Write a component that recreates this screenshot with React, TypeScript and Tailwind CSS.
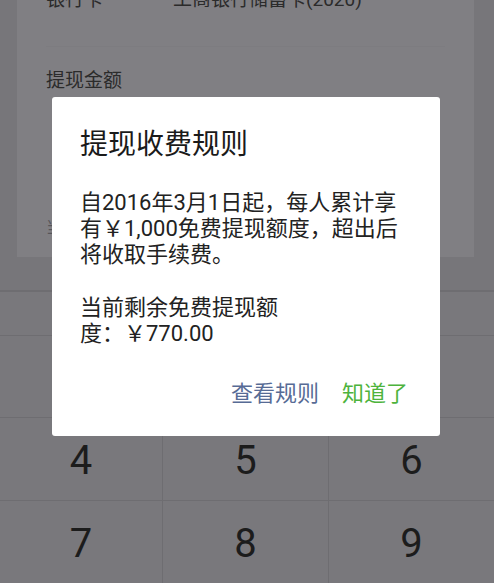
const font = { fontFamily: '"Roboto", "Noto Sans CJK SC", sans-serif' };

const rows = [
  ["4", "5", "6"],
  ["7", "8", "9"],
];

function Keypad() {
  return (
    <div className="mt-[33px] border-t border-[#6e6d71] bg-[#79787c]">
      <div className="h-[45px] border-t border-b border-[#6e6d71]" />
      <div className="grid h-[82px] grid-cols-[163px_166px_1fr] border-b border-[#6e6d71]">
        <div className="border-r border-[#6e6d71]" />
        <div className="border-r border-[#6e6d71]" />
        <div />
      </div>
      {rows.map((r, i) => (
        <div key={i} className="grid h-[83px] grid-cols-[163px_166px_1fr] border-b border-[#6e6d71]">
          {r.map((d, j) => (
            <div
              key={d}
              className={`flex items-center justify-center pt-[3px] text-[40px] leading-none text-[#1c1c1c] ${j < 2 ? "border-r border-[#6e6d71]" : ""}`}
            >
              {d}
            </div>
          ))}
        </div>
      ))}
    </div>
  );
}

function Dialog() {
  return (
    <div className="absolute left-[52px] top-[97px] h-[339px] w-[388px] rounded-[3px] bg-white px-[28px] pt-[32px]">
      <div className="text-[28px] leading-[32px] text-[#1a1a1a]">提现收费规则</div>
      <div className="mt-[29px] whitespace-nowrap text-[22px] leading-[26px] text-[#222]">
        自2016年3月1日起，每人累计享
        <br />
        有￥1,000免费提现额度，超出后
        <br />
        将收取手续费。
      </div>
      <div className="mt-[27px] whitespace-nowrap text-[22px] leading-[26px] text-[#222]">
        当前剩余免费提现额
        <br />
        度：￥770.00
      </div>
      <div className="mt-[34px] flex justify-end gap-[23px] pr-[4px] text-[22px] leading-[26px]">
        <span className="text-[#576b95]">查看规则</span>
        <span className="text-[#4db33c]">知道了</span>
      </div>
    </div>
  );
}

export default function App() {
  return (
    <div className="relative h-[583px] w-[494px] overflow-hidden bg-[#77767a]" style={font}>
      <div className="ml-[17px] flow-root h-[257px] w-[457px] bg-[#807f83] px-[29px]">
        <div className="flow-root h-[47px] border-b border-[#7d7c80]">
          <div className="-mt-[10px] flex text-[19px] leading-[20px] text-[#2b2b2b]">
            <span className="w-[127px]">银行卡</span>
            <span>工商银行储蓄卡(2020)</span>
          </div>
        </div>
        <div className="mt-[24px] text-[19px] leading-[20px] text-[#2b2b2b]">提现金额</div>
        <div className="mt-[129px] text-[16px] leading-[16px] text-[#56555a]">当前零钱余额¥770.00</div>
      </div>
      <Keypad />
      <Dialog />
    </div>
  );
}
